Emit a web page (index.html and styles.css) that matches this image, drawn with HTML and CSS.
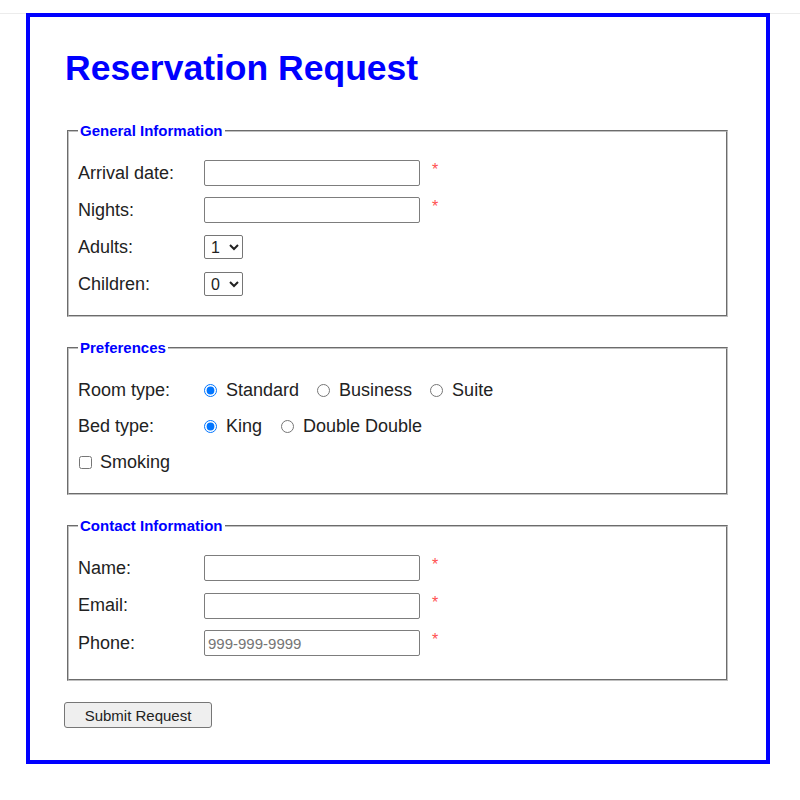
FILE: index.html
```html
<!DOCTYPE html>
<html lang="en">
<head>
<meta charset="utf-8">
<title>Reservation Request</title>
<link rel="stylesheet" href="styles.css">
</head>
<body>
<div class="topline"></div>
<main class="card">
  <h1 class="title">Reservation Request</h1>
  <form class="form">
    <fieldset class="group">
      <legend class="legend">General Information</legend>
      <div class="rows">
        <div class="row"><label class="lbl" for="arrival">Arrival date:</label><input class="text" id="arrival" type="text"><span class="req">*</span></div>
        <div class="row"><label class="lbl" for="nights">Nights:</label><input class="text" id="nights" type="text"><span class="req">*</span></div>
        <div class="row"><label class="lbl" for="adults">Adults:</label><select class="sel" id="adults"><option>1</option><option>2</option><option>3</option><option>4</option></select></div>
        <div class="row"><label class="lbl" for="children">Children:</label><select class="sel" id="children"><option>0</option><option>1</option><option>2</option><option>3</option></select></div>
      </div>
    </fieldset>

    <fieldset class="group">
      <legend class="legend">Preferences</legend>
      <div class="rows rows-tight">
        <div class="row"><span class="lbl">Room type:</span>
          <label class="opt"><input class="radio" type="radio" name="room" checked>Standard</label>
          <label class="opt"><input class="radio" type="radio" name="room">Business</label>
          <label class="opt"><input class="radio" type="radio" name="room">Suite</label>
        </div>
        <div class="row"><span class="lbl">Bed type:</span>
          <label class="opt"><input class="radio" type="radio" name="bed" checked>King</label>
          <label class="opt opt-wide"><input class="radio" type="radio" name="bed">Double Double</label>
        </div>
        <div class="row"><label class="opt opt-check"><input class="check" type="checkbox">Smoking</label></div>
      </div>
    </fieldset>

    <fieldset class="group group-last">
      <legend class="legend">Contact Information</legend>
      <div class="rows rows-loose">
        <div class="row"><label class="lbl" for="name">Name:</label><input class="text" id="name" type="text"><span class="req">*</span></div>
        <div class="row"><label class="lbl" for="email">Email:</label><input class="text" id="email" type="text"><span class="req">*</span></div>
        <div class="row"><label class="lbl" for="phone">Phone:</label><input class="text" id="phone" type="text" placeholder="999-999-9999"><span class="req">*</span></div>
      </div>
    </fieldset>

    <button class="submit" type="button">Submit Request</button>
  </form>
</main>
</body>
</html>
```

FILE: styles.css
```css
html, body {
  background: #ffffff;
}

body {
  margin: 0;
  font-family: "Liberation Sans", Arial, sans-serif;
  font-size: 18px;
  color: #222222;
}

.topline {
  height: 1px;
  margin-top: 13px;
  background: #ececec;
}

.card {
  box-sizing: border-box;
  width: 744px;
  margin-left: 26px;
  margin-top: -1px;
  border: 4px solid #0000ff;
  padding: 31px 36px 32px 35px;
}

.title {
  margin: 0 0 33px;
  font-size: 35.5px;
  line-height: 41px;
  font-weight: bold;
  color: #0000ff;
}

.form {
  margin: 0;
}

.group {
  margin: 0 2px 22px;
  padding: 21px 9px 18px;
  border: 2px groove #c0c0c0;
  min-width: 0;
}

.group-last {
  margin-bottom: 21px;
  padding-bottom: 23px;
}

.legend {
  padding: 0 2px;
  font-size: 15px;
  font-weight: bold;
  line-height: 17px;
  color: #0000ff;
}

.rows {
  display: flex;
  flex-direction: column;
  gap: 11px;
}

.rows-tight {
  gap: 10px;
}

.rows-loose {
  gap: 11.5px;
}

.row {
  display: flex;
  align-items: center;
  height: 26px;
}

.lbl {
  width: 126px;
  flex: none;
}

.text {
  box-sizing: border-box;
  width: 216px;
  height: 26px;
  margin: 0;
  padding: 0 3px;
  border: 1px solid #7d7d7d;
  border-radius: 2px;
  font-family: "Liberation Sans", Arial, sans-serif;
  font-size: 15px;
  color: #222222;
  background: #ffffff;
}

.text::placeholder {
  color: #757575;
}

.req {
  align-self: flex-start;
  margin-left: 12px;
  margin-top: 2px;
  font-size: 16px;
  line-height: 16px;
  color: #ff5050;
}

.sel {
  box-sizing: border-box;
  width: 39px;
  height: 24px;
  margin: 0;
  padding: 0 0 0 2px;
  border: 1px solid #767676;
  border-radius: 2px;
  font-family: "Liberation Sans", Arial, sans-serif;
  font-size: 16px;
  color: #222222;
  background: #ffffff;
}

.opt {
  display: inline-flex;
  align-items: center;
  gap: 9px;
  margin-right: 18px;
}

.opt-wide {
  margin-left: 1px;
}

.opt-check {
  gap: 8px;
  margin-left: 1px;
}

.radio,
.check {
  width: 13px;
  height: 13px;
  margin: 0;
}

.submit {
  box-sizing: border-box;
  display: block;
  width: 148px;
  height: 26px;
  margin: 0 0 0 -1px;
  padding: 0;
  border: 1px solid #767676;
  border-radius: 3px;
  background: #efefef;
  font-family: "Liberation Sans", Arial, sans-serif;
  font-size: 15px;
  color: #222222;
}
```
